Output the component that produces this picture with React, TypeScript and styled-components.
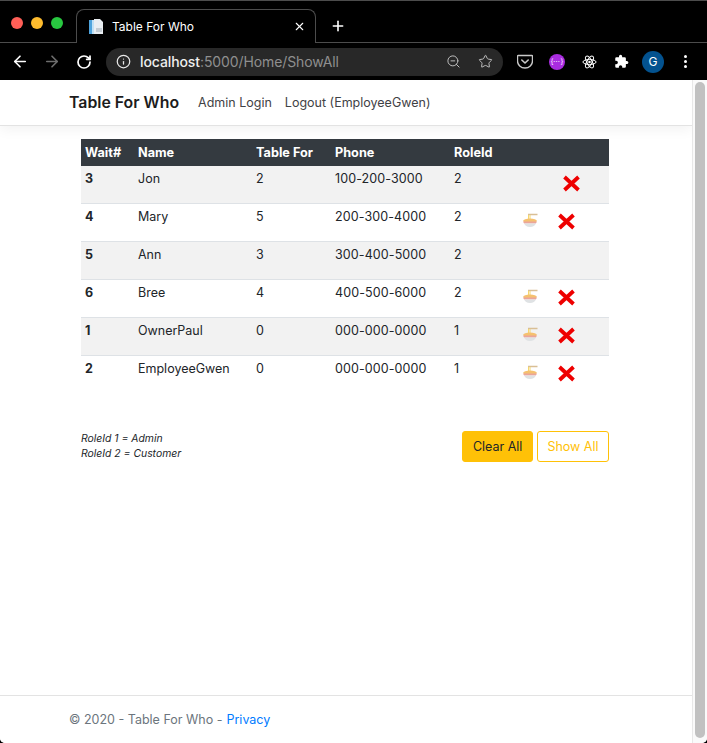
import React from 'react';
import styled, { createGlobalStyle } from 'styled-components';
import { ArrowLeft, ArrowRight, RotateCw, Info, ZoomOut, Star, Plus, X } from 'lucide-react';

const GlobalStyle = createGlobalStyle`
  html, body, #root {
    margin: 0;
    padding: 0;
    height: 100%;
    overflow: hidden;
    background: #000;
  }
  * { box-sizing: border-box; }
  body {
    font-family: Inter, "Liberation Sans", sans-serif;
  }
`;

const Window = styled.div`
  height: 743px;
  width: 707px;
  display: flex;
  flex-direction: column;
  overflow: hidden;
  border-radius: 0 0 5px 5px;
  background: #fff;
`;

const TabStrip = styled.div`
  height: 43px;
  flex: none;
  background: #000;
  border-top: 1px solid #4c4c4c;
  border-bottom: 1px solid #4c4c4c;
  display: flex;
  align-items: flex-end;
  padding-left: 11px;
`;

const Lights = styled.div`
  display: flex;
  gap: 8px;
  align-self: flex-start;
  margin-top: 16px;
  width: 65px;
`;

const Light = styled.span<{ $color: string }>`
  width: 12px;
  height: 12px;
  border-radius: 50%;
  background: ${p => p.$color};
`;

const Tab = styled.div`
  position: relative;
  width: 240px;
  height: 34px;
  margin-bottom: -1px;
  background: #000;
  border: 1px solid #4c4c4c;
  border-bottom: none;
  border-radius: 8px 8px 0 0;
  display: flex;
  align-items: center;
  padding: 0 9px 0 11px;
  color: #fff;
  font-size: 12px;
`;

const TabTitle = styled.span`
  margin-left: 8px;
  flex: 1;
`;

const NewTab = styled.div`
  color: #fff;
  display: flex;
  align-items: center;
  align-self: center;
  margin: 8px 0 0 14px;
`;

const Toolbar = styled.div`
  height: 37px;
  flex: none;
  background: #000;
  display: flex;
  align-items: center;
  padding-left: 11px;
`;

const NavIcon = styled.div<{ $dim?: boolean }>`
  width: 18px;
  height: 18px;
  margin-right: 14px;
  color: ${p => (p.$dim ? '#6e6e6e' : '#fff')};
  display: flex;
  align-items: center;
  justify-content: center;
`;

const UrlBar = styled.div`
  width: 397px;
  height: 28px;
  margin-left: -1px;
  border-radius: 14px;
  background: #282828;
  display: flex;
  align-items: center;
  padding: 0 2px 0 10px;
  font-size: 14px;
  color: #8f8f8f;
`;

const UrlText = styled.div`
  flex: 1;
  margin-left: 9px;
  letter-spacing: -0.1px;
  b {
    color: #eee;
    font-weight: 500;
  }
`;

const UrlAction = styled.div`
  width: 32px;
  display: flex;
  justify-content: center;
  color: #bdbdbd;
`;

const Extensions = styled.div`
  display: flex;
  align-items: center;
  margin-left: 6px;
`;

const Extension = styled.div`
  width: 32px;
  height: 32px;
  display: flex;
  align-items: center;
  justify-content: center;
  color: #fff;
`;

const PurpleBadge = styled.div`
  width: 16px;
  height: 16px;
  border-radius: 50%;
  background: #a92ce0;
  color: #fff;
  font-size: 7px;
  display: flex;
  align-items: center;
  justify-content: center;
`;

const Avatar = styled.div`
  width: 22px;
  height: 22px;
  border-radius: 50%;
  background: #03528f;
  color: #fff;
  font-size: 12px;
  display: flex;
  align-items: center;
  justify-content: center;
`;

const Kebab = styled.div`
  display: flex;
  flex-direction: column;
  gap: 2px;
  margin-left: 1px;
  span {
    width: 3px;
    height: 3px;
    border-radius: 50%;
    background: #fff;
  }
`;

const Viewport = styled.div`
  flex: 1;
  min-height: 0;
  display: flex;
`;

const Page = styled.div`
  flex: 1;
  display: flex;
  flex-direction: column;
  background: #fff;
  color: #212529;
`;

const Scrollbar = styled.div`
  width: 15px;
  flex: none;
  background: #fafafa;
  border-left: 1px solid #e8e8e8;
  padding: 2px 2px 5px 2px;
`;

const Thumb = styled.div`
  height: 100%;
  border-radius: 5px;
  background: #c1c1c1;
`;

const Navbar = styled.nav`
  height: 46px;
  flex: none;
  display: flex;
  align-items: center;
  padding-left: 69px;
  border-bottom: 1px solid #e3e3e3;
  box-shadow: 0 4px 12px rgba(0, 0, 0, 0.05);
`;

const Brand = styled.a`
  font-size: 15.85px;
  font-weight: 600;
  color: #1c1c1c;
  margin-right: 19px;
`;

const NavLink = styled.a`
  font-size: 12.5px;
  color: #3f4245;
  margin-right: 13px;
`;

const Main = styled.main`
  flex: 1;
  padding: 13px 83px 0 81px;
`;

const Table = styled.table`
  width: 528px;
  table-layout: fixed;
  border-collapse: separate;
  border-spacing: 0;
  font-size: 12.5px;
`;

const HeadRow = styled.tr`
  height: 27px;
  background: #343a40;
  color: #fff;
`;

const Th = styled.th`
  text-align: left;
  font-weight: 700;
  font-size: 12.7px;
  padding: 0 4px;
`;

const Row = styled.tr<{ $striped: boolean }>`
  height: 38px;
  background: ${p => (p.$striped ? '#f2f2f2' : '#fff')};
  td {
    border-bottom: 1px solid #dee2e6;
  }
  &:last-child td {
    border-bottom: none;
  }
`;

const Td = styled.td<{ $bold?: boolean; $digits?: boolean }>`
  padding: 5px 4px 0;
  vertical-align: top;
  font-weight: ${p => (p.$bold ? 700 : 400)};
  letter-spacing: ${p => (p.$digits ? '0.1px' : '0')};
  line-height: 16px;
`;

const IconCell = styled.td`
  padding: 0;
  vertical-align: top;
`;

const BowlWrap = styled.div`
  padding: 9px 0 0 12px;
`;

const RemoveWrap = styled.div<{ $solo: boolean }>`
  padding: 9px 0 0 ${p => (p.$solo ? 12 : 7)}px;
`;

const Below = styled.div`
  margin-top: 37px;
  display: flex;
  justify-content: space-between;
  align-items: flex-start;
`;

const Legend = styled.div`
  font-size: 10.4px;
  font-style: italic;
  line-height: 15px;
  color: #212529;
`;

const Buttons = styled.div`
  display: flex;
  gap: 4px;
`;

const Button = styled.button<{ $solid?: boolean }>`
  height: 31px;
  padding: 0 9.5px;
  font: 400 12.5px Inter, "Liberation Sans", sans-serif;
  border-radius: 3px;
  border: 1px solid #ffc107;
  background: ${p => (p.$solid ? '#ffc107' : '#fff')};
  color: ${p => (p.$solid ? '#212529' : '#ffc107')};
`;

const Footer = styled.footer`
  height: 48px;
  flex: none;
  border-top: 1px solid #e3e3e3;
  padding-left: 69px;
  display: flex;
  align-items: center;
  font-size: 12.5px;
  color: #6c757d;
  a {
    color: #007bff;
    margin-left: 4px;
  }
`;

const PageIcon = () => (
  <svg width="16" height="17" viewBox="0 0 16 17">
    <path d="M1 2h8l2 2v12H1z" fill="#bfe0f5" />
    <path d="M1 2h3v14H1z" fill="#4ea3dc" />
    <path d="M6 1h6l3 3v12H6z" fill="#e9eef2" />
    <path d="M8 10h6v4H8z" fill="#c3ccd3" />
  </svg>
);

const PocketIcon = () => (
  <svg width="16" height="15" viewBox="0 0 16 15" fill="none" stroke="#c9c9c9">
    <path d="M1 1.5h14a.5.5 0 0 1 .5.5v5a7.5 7 0 0 1-15 0V2a.5.5 0 0 1 .5-.5z" strokeWidth="1.4" />
    <path d="M4.8 6l3.2 3 3.2-3" strokeWidth="1.6" strokeLinecap="round" strokeLinejoin="round" />
  </svg>
);

const AtomIcon = () => (
  <svg width="15" height="14" viewBox="-12 -11 24 22" fill="none" stroke="#fff" strokeWidth="1.6">
    <ellipse rx="10.5" ry="4" />
    <ellipse rx="10.5" ry="4" transform="rotate(60)" />
    <ellipse rx="10.5" ry="4" transform="rotate(120)" />
    <circle r="2" fill="#fff" stroke="none" />
  </svg>
);

// chrome's extensions puzzle piece
const PuzzleIcon = () => (
  <svg width="15" height="15" viewBox="0 0 24 24" fill="#fff">
    <path d="M20.500 11H19V7a2 2 0 0 0-2-2h-4V3.500a2.500 2.500 0 0 0-5 0V5H4a2 2 0 0 0-2 2v3.800h1.500a2.700 2.700 0 0 1 0 5.400H2V20a2 2 0 0 0 2 2h3.800v-1.500a2.700 2.700 0 0 1 5.400 0V22H17a2 2 0 0 0 2-2v-4h1.500a2.500 2.500 0 0 0 0-5z" />
  </svg>
);

const BowlIcon = () => (
  <svg width="17" height="16" viewBox="0 0 17 16">
    <path d="M6 1.500H15.500" stroke="#d9bf95" strokeWidth="1.500" />
    <path d="M6.500 2v5M8 2v5" stroke="#f5d76e" strokeWidth="1" />
    <ellipse cx="8" cy="7.800" rx="6.800" ry="2.300" fill="#f5c16f" />
    <path d="M1.200 8.500h13.600c0 .8-.4 1.400-1 2H2.200c-.6-.6-1-1.200-1-2z" fill="#eba59a" />
    <path d="M2.200 10.500h11.600c-.8 2.300-2.600 3.500-5.800 3.500s-5-1.200-5.800-3.500z" fill="#dfe2e4" />
  </svg>
);

const RemoveIcon = () => (
  <svg width="19" height="17" viewBox="0 0 19 17">
    <path d="M2.500 2l14 13M16.500 2l-14 13" stroke="#ee0000" strokeWidth="3.800" />
  </svg>
);

const rows = [
  { wait: 3, name: 'Jon', seats: 2, phone: '100-200-3000', role: 2, bowl: false, remove: true },
  { wait: 4, name: 'Mary', seats: 5, phone: '200-300-4000', role: 2, bowl: true, remove: true },
  { wait: 5, name: 'Ann', seats: 3, phone: '300-400-5000', role: 2, bowl: false, remove: false },
  { wait: 6, name: 'Bree', seats: 4, phone: '400-500-6000', role: 2, bowl: true, remove: true },
  { wait: 1, name: 'OwnerPaul', seats: 0, phone: '000-000-0000', role: 1, bowl: true, remove: true },
  { wait: 2, name: 'EmployeeGwen', seats: 0, phone: '000-000-0000', role: 1, bowl: true, remove: true },
];

export default function App() {
  return (
    <>
      <GlobalStyle />
      <Window>
        <TabStrip>
          <Lights>
            <Light $color="#ff5f57" />
            <Light $color="#febc2e" />
            <Light $color="#28c840" />
          </Lights>
          <Tab>
            <PageIcon />
            <TabTitle>Table For Who</TabTitle>
            <X size={13} strokeWidth={2} />
          </Tab>
          <NewTab>
            <Plus size={16} strokeWidth={2.4} />
          </NewTab>
        </TabStrip>
        <Toolbar>
          <NavIcon><ArrowLeft size={19} strokeWidth={2.2} /></NavIcon>
          <NavIcon $dim><ArrowRight size={19} strokeWidth={2.2} /></NavIcon>
          <NavIcon><RotateCw size={16} strokeWidth={2.6} /></NavIcon>
          <UrlBar>
            <Info size={15} color="#e8e8e8" strokeWidth={2} />
            <UrlText><b>localhost</b>:5000/Home/ShowAll</UrlText>
            <UrlAction><ZoomOut size={15} strokeWidth={1.6} /></UrlAction>
            <UrlAction><Star size={15} strokeWidth={1.6} /></UrlAction>
          </UrlBar>
          <Extensions>
            <Extension><PocketIcon /></Extension>
            <Extension><PurpleBadge>{'{⋯}'}</PurpleBadge></Extension>
            <Extension><AtomIcon /></Extension>
            <Extension><PuzzleIcon /></Extension>
            <Extension><Avatar>G</Avatar></Extension>
            <Extension><Kebab><span /><span /><span /></Kebab></Extension>
          </Extensions>
        </Toolbar>
        <Viewport>
          <Page>
            <Navbar>
              <Brand>Table For Who</Brand>
              <NavLink>Admin Login</NavLink>
              <NavLink>Logout (EmployeeGwen)</NavLink>
            </Navbar>
            <Main>
              <Table>
                <colgroup>
                  <col width="53" />
                  <col width="118" />
                  <col width="79" />
                  <col width="119" />
                  <col width="60" />
                  <col width="40" />
                  <col width="59" />
                </colgroup>
                <thead>
                  <HeadRow>
                    <Th>Wait#</Th>
                    <Th>Name</Th>
                    <Th>Table For</Th>
                    <Th>Phone</Th>
                    <Th>RoleId</Th>
                    <Th />
                    <Th />
                  </HeadRow>
                </thead>
                <tbody>
                  {rows.map((r, i) => (
                    <Row key={r.wait} $striped={i % 2 === 0}>
                      <Td $bold>{r.wait}</Td>
                      <Td>{r.name}</Td>
                      <Td>{r.seats}</Td>
                      <Td $digits>{r.phone}</Td>
                      <Td>{r.role}</Td>
                      <IconCell>{r.bowl && <BowlWrap><BowlIcon /></BowlWrap>}</IconCell>
                      <IconCell>
                        {r.remove && <RemoveWrap $solo={!r.bowl}><RemoveIcon /></RemoveWrap>}
                      </IconCell>
                    </Row>
                  ))}
                </tbody>
              </Table>
              <Below>
                <Legend>
                  RoleId 1 = Admin
                  <br />
                  RoleId 2 = Customer
                </Legend>
                <Buttons>
                  <Button $solid>Clear All</Button>
                  <Button>Show All</Button>
                </Buttons>
              </Below>
            </Main>
            <Footer>
              © 2020 - Table For Who - <a>Privacy</a>
            </Footer>
          </Page>
          <Scrollbar><Thumb /></Scrollbar>
        </Viewport>
      </Window>
    </>
  );
}
